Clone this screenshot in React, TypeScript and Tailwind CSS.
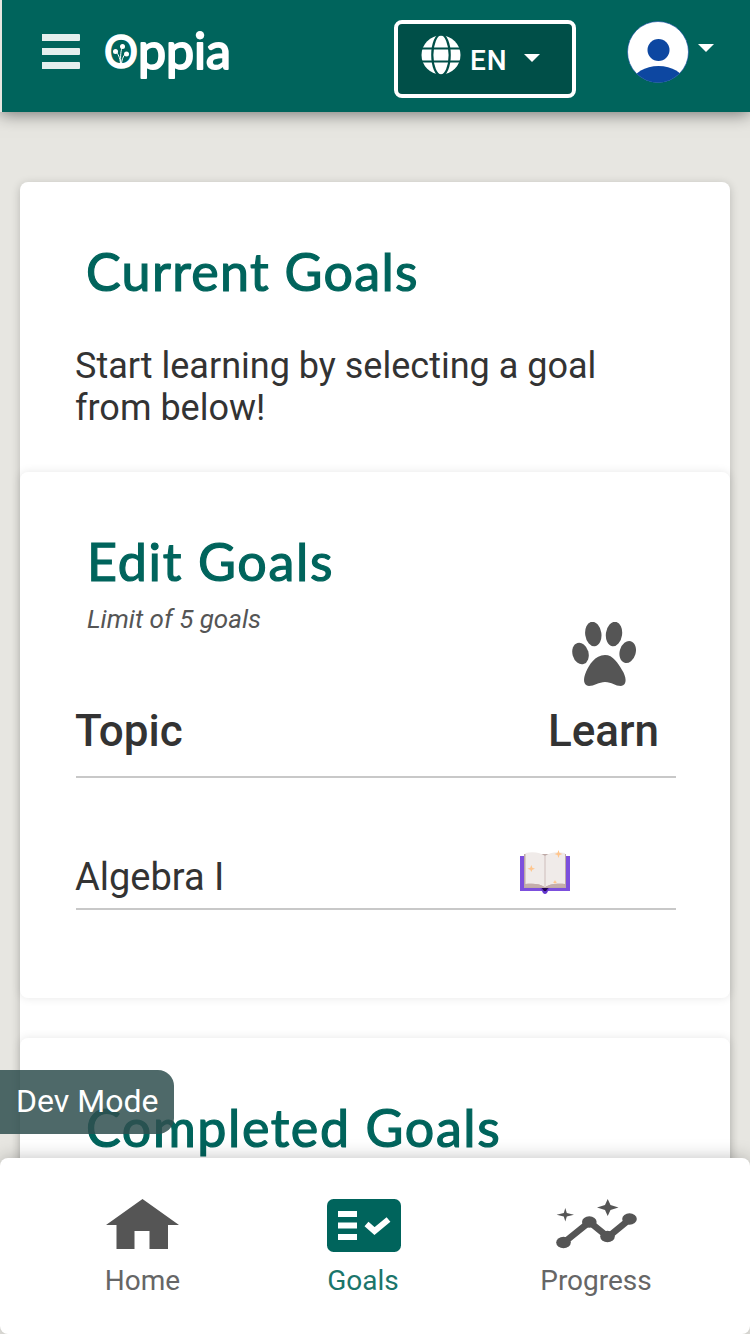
import React from "react";

const heading =
  "font-['Lato',sans-serif] font-normal text-[52px] leading-[64px] text-[#00645c] whitespace-nowrap [-webkit-text-stroke:1.2px_#00645c]";

function Logo() {
  return (
    <svg width="134" height="66" viewBox="0 -5 134 66" className="block" fill="#fff" aria-label="Oppia">
      <g fontFamily="Lato, sans-serif" stroke="#fff" strokeLinejoin="round">
        <text x="0" y="42" fontSize="46" strokeWidth="1.6" textLength="34" lengthAdjust="spacingAndGlyphs">O</text>
        <text x="34" y="43" fontSize="50" strokeWidth="2" textLength="93" lengthAdjust="spacingAndGlyphs">ppia</text>
      </g>
      <g stroke="#fff" strokeWidth="1" fill="none">
        <path d="M16.500 38C16 31 14 28 11.500 25M17 38C16 30 17 24 18.500 20M17.500 38C18 32 20 29 22.500 27" />
      </g>
      <circle cx="11.500" cy="25.500" r="2.500" />
      <circle cx="18.500" cy="20.500" r="2.500" />
      <circle cx="22.500" cy="28" r="2.500" />
    </svg>
  );
}

function Globe() {
  return (
    <svg width="40" height="40" viewBox="0 0 40 40" className="block">
      <circle cx="20" cy="20" r="19.500" fill="#fff" />
      <g fill="none" stroke="#004f48" strokeWidth="2.200">
        <ellipse cx="20" cy="20" rx="8.700" ry="20.500" />
        <path d="M0 13.500H40M0 26.500H40" />
      </g>
    </svg>
  );
}

function Caret() {
  return (
    <svg width="16" height="8" viewBox="0 0 16 8" className="block">
      <path d="M0 0H16L8 8Z" fill="#fff" />
    </svg>
  );
}

function Avatar() {
  return (
    <svg width="62" height="62" viewBox="0 0 62 62" className="block">
      <defs>
        <clipPath id="face">
          <circle cx="31" cy="31" r="30.500" />
        </clipPath>
      </defs>
      <circle cx="31" cy="31" r="30.500" fill="#fff" />
      <g fill="#0d47a1" clipPath="url(#face)">
        <circle cx="31.500" cy="29" r="11" />
        <ellipse cx="31.500" cy="60" rx="25" ry="15" />
      </g>
      <circle cx="31" cy="31" r="30.500" fill="none" stroke="#0d47a1" strokeWidth=".6" />
    </svg>
  );
}

function Paw() {
  return (
    <svg width="64" height="64" viewBox="0 0 64 64" className="block" fill="#555">
      <ellipse cx="8.500" cy="31.500" rx="8" ry="11" transform="rotate(-16 8.500 31.500)" />
      <ellipse cx="21.300" cy="12" rx="8.100" ry="12.300" transform="rotate(-8 21.300 12)" />
      <ellipse cx="42" cy="12" rx="8.100" ry="12.300" transform="rotate(8 42 12)" />
      <ellipse cx="55.700" cy="30" rx="8" ry="11.200" transform="rotate(16 55.700 30)" />
      <path d="M33 33C41 33 46 41 50 48C54 54 56 63 49 64C43 64 40 60 33 60C27 60 22 64 17 64C11 63 11 57 14 50C17 43 23 33 33 33Z" />
    </svg>
  );
}

function Book() {
  return (
    <svg width="50" height="44" viewBox="0 0 50 44" className="block">
      <path d="M0 6H50V41H0Z" fill="#7c4fdd" />
      <path d="M20 37H30L27 43Q25 45 23 43Z" fill="#6336ce" />
      <path d="M21 37H29L26 41H24Z" fill="#21034f" />
      <path d="M4 4H46V38H4Z" fill="#bda9a6" />
      <path d="M5.500 3C14 1 21 3 25 6C29 3 36 1 45 3V34C38 33 29 34 25 37C21 34 13 33 5.500 34Z" fill="#f0ebe9" />
      <path d="M24 6H26V37H24Z" fill="#dfd4d2" />
      <path d="M5.500 34C13 33 21 34 24 37H5ZM44.500 34C37 33 29 34 26 37H45Z" fill="#c4adab" />
      <path d="M38.500 0L39.500 3L42.500 4L39.500 5L38.500 8L37.500 5L34.500 4L37.500 3ZM11.300 15L12.300 17.700L15 18.700L12.300 19.700L11.300 22L10.300 19.700L7.500 18.700L10.300 17.700ZM35 30L35.700 31.500L37 32.300L35.700 33L35 34L34.300 33L33 32.300L34.300 31.500Z" fill="#ffc58c" />
    </svg>
  );
}

function HomeIcon() {
  return (
    <svg width="74" height="50" viewBox="0 0 74 50" className="block">
      <path d="M36.500 0L73 26H62V50H43.500V32H28.500V50H10.500V26H0Z" fill="#555" />
    </svg>
  );
}

function GoalsIcon() {
  return (
    <svg width="74" height="53" viewBox="0 0 74 53" className="block">
      <rect width="74" height="53" rx="6.500" fill="#00645c" />
      <path d="M11 12H30V18H11ZM11 23.500H30V29.500H11ZM11 35H30V41H11Z" fill="#fff" />
      <path d="M39.500 25L47.500 32L61.500 20.500" stroke="#fff" strokeWidth="6" fill="none" />
    </svg>
  );
}

function ProgressIcon() {
  return (
    <svg width="82" height="50" viewBox="0 0 82 50" className="block" fill="#555">
      <path d="M8 43.500L33.500 23L52 38L74 20" stroke="#555" strokeWidth="6.500" fill="none" />
      <ellipse cx="7.500" cy="43.500" rx="7.300" ry="5.800" />
      <ellipse cx="33.300" cy="23" rx="7.300" ry="5.800" />
      <ellipse cx="51.500" cy="37.500" rx="7.300" ry="5.800" />
      <ellipse cx="73.500" cy="20" rx="7.300" ry="5.800" />
      <path d="M51.700 0L54.500 6L62.500 8.500L54.500 11L51.700 17L49 11L41 8.500L49 6Z" />
      <path d="M9.300 9L10.800 14L18 15.700L10.800 17.400L9.300 22.500L7.800 17.400L.6 15.700L7.800 14Z" />
    </svg>
  );
}

export default function App() {
  return (
    <div className="relative flex h-[1334px] w-[750px] flex-col overflow-hidden bg-[#e7e6e1] font-['Roboto',sans-serif] text-[#333]">
      <header className="relative z-10 flex h-[112px] shrink-0 border-l-2 border-[#e7e6e1] bg-[#00645c] shadow-[0_2px_16px_rgba(0,0,0,0.5)]">
        <div className="ml-10 mt-[34px] flex h-[35px] w-[38px] shrink-0 flex-col justify-between">
          <div className="h-[7px] rounded-r-[1px] bg-[#e5efee]" />
          <div className="h-[7px] rounded-r-[1px] bg-[#e5efee]" />
          <div className="h-[7px] rounded-r-[1px] bg-[#e5efee]" />
        </div>
        <div className="ml-6 mt-[21px] w-[134px] shrink-0">
          <Logo />
        </div>
        <div className="ml-[156px] mt-5 flex h-[78px] w-[182px] shrink-0 rounded-[8px] border-4 border-white bg-[#004f48]">
          <div className="ml-[23px] mt-[11px]">
            <Globe />
          </div>
          <span className="ml-[9px] mt-[21px] w-[41px] text-[28px] font-medium leading-8 tracking-[1px] text-white">EN</span>
          <div className="ml-[13px] mt-[30px]">
            <Caret />
          </div>
        </div>
        <div className="ml-[51px] mt-[21px]">
          <Avatar />
        </div>
        <div className="ml-[9px] mt-[44px]">
          <Caret />
        </div>
      </header>

      <main className="h-[1046px] overflow-hidden px-5 pt-[70px]">
        <section className="h-[1100px] rounded-[8px] bg-white shadow-[0_2px_10px_rgba(0,0,0,0.2)]">
          <div className="h-[290px] pl-[55px] pt-[57px]">
            <h2 className={`${heading} ml-[11px] tracking-[1.3px]`}>Current Goals</h2>
            <p className="mt-[42px] w-[560px] text-[36px] leading-[42px]">Start learning by selecting a goal from below!</p>
          </div>
          <div className="h-[526px] rounded-[8px] bg-white pl-[56px] pr-[54px] pt-[57px] shadow-[0_0_10px_rgba(0,0,0,0.1)]">
            <h2 className={`${heading} ml-[11px] tracking-[1.7px]`}>Edit Goals</h2>
            <div className="flex h-[185px] justify-between border-b-2 border-[#c8c8c8]">
              <div>
                <p className="ml-[11px] mt-[10px] text-[26px] italic leading-8 text-[#555]">Limit of 5 goals</p>
                <p className="-ml-px mt-[70px] text-[44px] font-medium leading-[52px]">Topic</p>
              </div>
              <div className="mr-[17px] flex flex-col items-center pt-[29px]">
                <div className="pl-[2px]">
                  <Paw />
                </div>
                <p className="mt-[19px] text-[44px] font-medium leading-[52px]">Learn</p>
              </div>
            </div>
            <div className="flex h-[132px] justify-between border-b-2 border-[#c8c8c8]">
              <p className="-ml-px mt-[76px] text-[38px] leading-[46px]">Algebra I</p>
              <div className="mr-[106px] mt-[72px]">
                <Book />
              </div>
            </div>
          </div>
          <div className="mt-10 h-[300px] rounded-[8px] bg-white pl-[66px] pt-[57px] shadow-[0_0_10px_rgba(0,0,0,0.1)]">
            <h2 className={`${heading} tracking-[1.6px]`}>Completed Goals</h2>
          </div>
        </section>
      </main>

      <div className="absolute left-0 top-[1070px] flex h-16 w-[174px] items-center rounded-r-[16px] bg-[rgba(47,79,79,0.85)] pb-[2px] pl-4 text-[32px] text-white">
        <span className="whitespace-nowrap">Dev Mode</span>
      </div>

      <nav className="relative flex h-[176px] shrink-0 rounded-[8px] bg-white text-[28px] leading-8 text-[#666] shadow-[0_0_18px_rgba(0,0,0,0.25)]">
        <div className="ml-[62px] flex w-[160px] flex-col items-center pt-[41px]">
          <div className="pl-px">
            <HomeIcon />
          </div>
          <span className="mt-[16px] pl-px">Home</span>
        </div>
        <div className="ml-[62px] flex w-[160px] flex-col items-center pt-[41px] text-[#1a756b]">
          <GoalsIcon />
          <span className="mt-[13px] pr-[2px]">Goals</span>
        </div>
        <div className="ml-[72px] flex w-[160px] flex-col items-center pt-[41px]">
          <div className="pl-px">
            <ProgressIcon />
          </div>
          <span className="mt-[16px]">Progress</span>
        </div>
      </nav>
    </div>
  );
}
